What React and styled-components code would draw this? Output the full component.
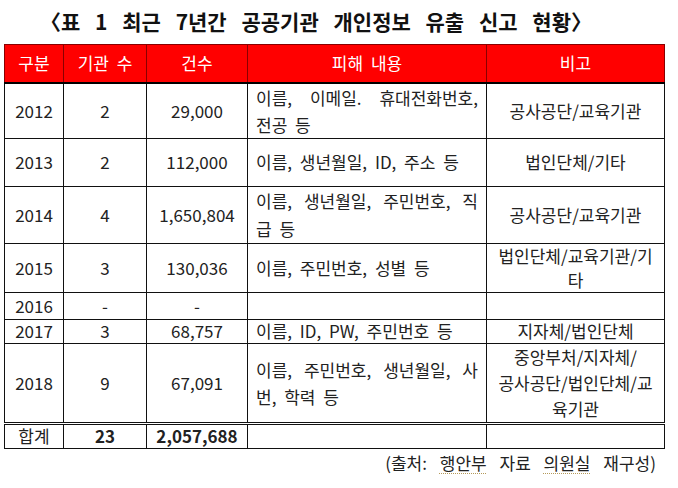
import React from "react";
import styled, { createGlobalStyle } from "styled-components";

const Global = createGlobalStyle`
  html, body { margin: 0; padding: 0; background: #fff; }
  body { font-family: "Noto Sans CJK KR", "Noto Sans", sans-serif; color: #222; }
`;

const Page = styled.div`
  width: 678px;
  height: 488px;
  box-sizing: border-box;
  padding-left: 4px;
  overflow: hidden;
`;

const Title = styled.div`
  height: 44px;
  box-sizing: border-box;
  padding: 6px 0 0 36px;
  font-size: 21px;
  font-weight: 700;
  line-height: 30px;
  word-spacing: 10px;
  color: #111;
  white-space: nowrap;
`;

const Table = styled.table`
  border-collapse: collapse;
  table-layout: fixed;
  width: 660px;
  font-size: 17px;
`;

const Row = styled.tr`
  height: ${(p) => p.$h}px;
`;

const HeadCell = styled.th`
  background: #ff0000;
  color: #fff;
  font-weight: 400;
  font-size: 17px;
  line-height: 22px;
  word-spacing: 4px;
  padding: 0;
  border: 1px solid #8a0000;
  border-bottom: 2px solid #000;
  text-align: center;
  vertical-align: middle;
`;

const Cell = styled.td`
  border: 1px solid #111;
  padding: 0 ${(p) => (p.$desc ? "8px" : "2px")};
  text-align: ${(p) => (p.$desc ? "left" : "center")};
  vertical-align: middle;
  line-height: ${(p) => p.$lh || 22}px;
  font-weight: ${(p) => (p.$bold ? 700 : 400)};
  border-top: ${(p) => (p.$double ? "3px double #111" : "1px solid #111")};
  white-space: nowrap;
  word-spacing: ${(p) => (p.$desc ? "4px" : "0")};
  color: #222;
`;

const JustLine = styled.div`
  display: flex;
  justify-content: space-between;
`;

const Line = styled.div``;

const Source = styled.div`
  width: 652px;
  text-align: right;
  font-size: 17px;
  line-height: 26px;
  margin-top: 1px;
  color: #222;
  word-spacing: 9px;
  white-space: nowrap;
`;

const Mark = styled.span`
  text-decoration: underline dotted #b59a5a;
  text-decoration-thickness: 1px;
  text-underline-offset: 3px;
`;

const widths = [59, 83, 101, 239, 178];

const rows = [
  { y: "2012", n: "2", c: "29,000", h: 54, lh: 27, desc: [{ j: ["이름,", "이메일.", "휴대전화번호,"] }, "전공 등"], note: ["공사공단/교육기관"] },
  { y: "2013", n: "2", c: "112,000", h: 48, desc: ["이름, 생년월일, ID, 주소 등"], note: ["법인단체/기타"] },
  { y: "2014", n: "4", c: "1,650,804", h: 54, lh: 28, desc: [{ j: ["이름,", "생년월일,", "주민번호,", "직"] }, "급 등"], note: ["공사공단/교육기관"] },
  { y: "2015", n: "3", c: "130,036", h: 49, desc: ["이름, 주민번호, 성별 등"], note: ["법인단체/교육기관/기", "타"], nlh: 24 },
  { y: "2016", n: "-", c: "-", h: 27, desc: [], note: [] },
  { y: "2017", n: "3", c: "68,757", h: 24, desc: ["이름, ID, PW, 주민번호 등"], note: ["지자체/법인단체"] },
  { y: "2018", n: "9", c: "67,091", h: 80, lh: 27, desc: [{ j: ["이름,", "주민번호,", "생년월일,", "사"] }, "번, 학력 등"], note: ["중앙부처/지자체/", "공사공단/법인단체/교", "육기관"], nlh: 26 },
];

function Desc({ lines }) {
  return lines.map((l, i) =>
    typeof l === "string" ? (
      <Line key={i}>{l}</Line>
    ) : (
      <JustLine key={i}>
        {l.j.map((w, k) => (
          <span key={k}>{w}</span>
        ))}
      </JustLine>
    )
  );
}

export default function App() {
  return (
    <Page>
      <Global />
      <Title>〈표 1 최근 7년간 공공기관 개인정보 유출 신고 현황〉</Title>
      <Table>
        <colgroup>
          {widths.map((w, i) => (
            <col key={i} style={{ width: w }} />
          ))}
        </colgroup>
        <thead>
          <Row $h={38}>
            <HeadCell>구분</HeadCell>
            <HeadCell>기관 수</HeadCell>
            <HeadCell>건수</HeadCell>
            <HeadCell>피해 내용</HeadCell>
            <HeadCell>비고</HeadCell>
          </Row>
        </thead>
        <tbody>
          {rows.map((r) => (
            <Row key={r.y} $h={r.h}>
              <Cell>{r.y}</Cell>
              <Cell>{r.n}</Cell>
              <Cell>{r.c}</Cell>
              <Cell $desc $lh={r.lh}>
                <Desc lines={r.desc} />
              </Cell>
              <Cell $lh={r.nlh}>
                {r.note.map((t, i) => (
                  <Line key={i}>{t}</Line>
                ))}
              </Cell>
            </Row>
          ))}
          <Row $h={25}>
            <Cell $double>합계</Cell>
            <Cell $double $bold>23</Cell>
            <Cell $double $bold>2,057,688</Cell>
            <Cell $double $desc></Cell>
            <Cell $double></Cell>
          </Row>
        </tbody>
      </Table>
      <Source>
        (출처: <Mark>행안부</Mark> 자료 <Mark>의원실</Mark> 재구성)
      </Source>
    </Page>
  );
}
